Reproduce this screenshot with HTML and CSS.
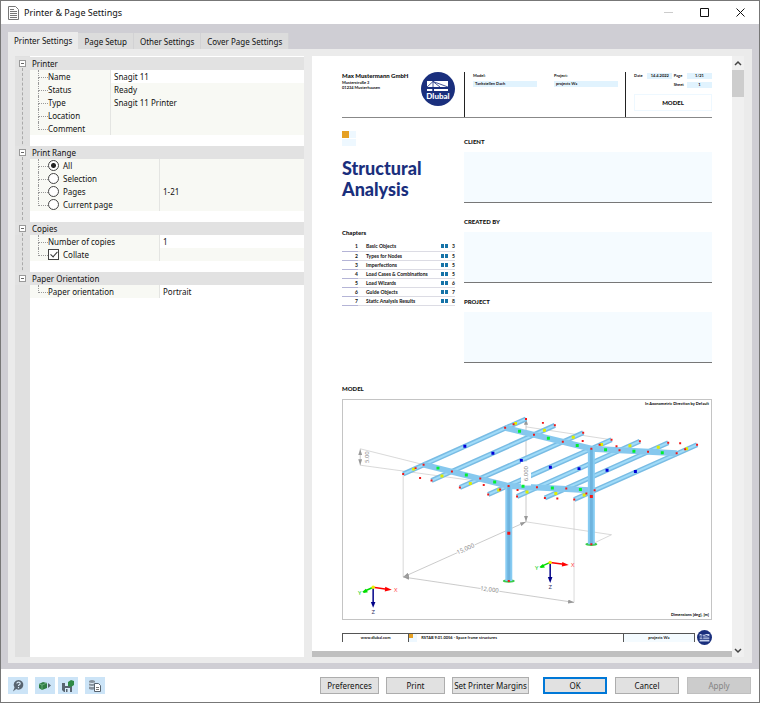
FILE: index.html
```html
<!DOCTYPE html>
<html lang="en">
<head>
  <meta charset="UTF-8">
  <title>Printer &amp; Page Settings</title>
  <link rel="stylesheet" href="styles.css">
</head>
<body>
<div class="window">

  <header class="titlebar">
    <svg class="app-icon" width="11" height="14" viewBox="0 0 11 14"><path d="M.5.5h7l3 3v10H.5z" fill="#fff" stroke="#777"/><path d="M2 3.500h4M2 5.500h7M2 7.500h7M2 9.500h7M2 11.500h7" stroke="#777"/></svg>
    <h1>Printer &amp; Page Settings</h1>
    <div class="controls">
      <button aria-label="Minimize"><svg width="9" height="9" viewBox="0 0 9 9"><path d="M0 4.500h9" stroke="#ccc"/></svg></button>
      <button aria-label="Maximize"><svg width="9" height="9" viewBox="0 0 9 9"><path d="M.5.5h8v8h-8z" fill="none" stroke="#111"/></svg></button>
      <button aria-label="Close"><svg width="9" height="9" viewBox="0 0 9 9"><path d="M.5.5l8 8M8.500.5l-8 8" stroke="#111"/></svg></button>
    </div>
  </header>

  <main class="frame">
    <nav class="tabs">
      <button class="tab active">Printer Settings</button>
      <button class="tab">Page Setup</button>
      <button class="tab">Other Settings</button>
      <button class="tab">Cover Page Settings</button>
    </nav>

    <div class="panel">
      <form class="tree" id="settings">
        <section class="group narrow">
          <h2><button type="button" class="toggle" aria-label="Collapse Printer"></button>Printer</h2>
          <div class="row edit"><label for="name">Name</label><select id="name"><option>Snagit 11</option></select></div>
          <div class="row"><span>Status</span><output>Ready</output></div>
          <div class="row"><span>Type</span><output>Snagit 11 Printer</output></div>
          <div class="row"><span>Location</span><output></output></div>
          <div class="row"><span>Comment</span><output></output></div>
        </section>
        <section class="group">
          <h2><button type="button" class="toggle" aria-label="Collapse Print Range"></button>Print Range</h2>
          <div class="row"><label><input type="radio" name="range" checked>All</label><output></output></div>
          <div class="row"><label><input type="radio" name="range">Selection</label><output></output></div>
          <div class="row"><label><input type="radio" name="range">Pages</label><input type="text" value="1-21" aria-label="Page range"></div>
          <div class="row"><label><input type="radio" name="range">Current page</label><output></output></div>
        </section>
        <section class="group">
          <h2><button type="button" class="toggle" aria-label="Collapse Copies"></button>Copies</h2>
          <div class="row edit"><label for="copies">Number of copies</label><input type="text" id="copies" value="1"></div>
          <div class="row"><label><input type="checkbox" checked>Collate</label><output></output></div>
        </section>
        <section class="group">
          <h2><button type="button" class="toggle" aria-label="Collapse Paper Orientation"></button>Paper Orientation</h2>
          <div class="row edit"><label for="orient">Paper orientation</label><select id="orient"><option>Portrait</option></select></div>
        </section>
      </form>

      <div class="preview">
        <article class="doc">
          <header class="doc-head">
            <div class="company">
              <div>
                <strong>Max Mustermann GmbH</strong>
                <p>Musterstraße 3</p>
                <p>01234 Musterhausen</p>
              </div>
              <svg class="logo" width="34" height="34" viewBox="0 0 34 34">
                <circle cx="17" cy="17" r="17" fill="#1a2f7d"/>
                <path d="M6 9h21v6H6zM6 17h5.500v2H6zM13 17h14v2H13z" fill="#fff"/>
                <path d="M6 15L12 9.500 27 15M12 9v10M12 9.500L19 15" fill="none" stroke="#1a2f7d" stroke-width=".8"/>
                <text x="17" y="27" class="logo-text">Dlubal</text>
              </svg>
            </div>
            <div class="meta">
              <div class="meta-item"><p>Model:</p><p class="fill">Tankstellen Dach</p></div>
              <div class="meta-item"><p>Project:</p><p class="fill">projects Wa</p></div>
            </div>
            <div class="sheet">
              <div class="sheet-grid">
                <span>Date</span><span class="fill">14.4.2022</span><span>Page</span><span class="fill">1/21</span>
                <span></span><span></span><span>Sheet</span><span class="fill">1</span>
              </div>
              <div class="sheet-name">MODEL</div>
            </div>
          </header>

          <div class="doc-body">
            <div class="cover">
              <svg class="squares" width="14" height="15" viewBox="0 0 14 15"><path d="M7 0h7v7H7zM0 8h14v7H0z" fill="#eef8ff"/><path d="M0 0h7v7H0z" fill="#e5a023"/></svg>
              <h2>Structural Analysis</h2>
              <h3>Chapters</h3>
              <table class="chapters">
                <tr><td>1</td><td>Basic Objects</td><td><i></i><i></i></td><td>3</td></tr>
                <tr><td>2</td><td>Types for Nodes</td><td><i></i><i></i></td><td>5</td></tr>
                <tr><td>3</td><td>Imperfections</td><td><i></i><i></i></td><td>5</td></tr>
                <tr><td>4</td><td>Load Cases &amp; Combinations</td><td><i></i><i></i></td><td>5</td></tr>
                <tr><td>5</td><td>Load Wizards</td><td><i></i><i></i></td><td>6</td></tr>
                <tr><td>6</td><td>Guide Objects</td><td><i></i><i></i></td><td>7</td></tr>
                <tr><td>7</td><td>Static Analysis Results</td><td><i></i><i></i></td><td>8</td></tr>
              </table>
            </div>
            <div class="fields">
              <section><h3>CLIENT</h3><div class="box"></div></section>
              <section><h3>CREATED BY</h3><div class="box"></div></section>
              <section><h3>PROJECT</h3><div class="box"></div></section>
            </div>
          </div>

          <h3 class="model-title">MODEL</h3>
          <svg class="model" viewBox="342 399 370 220">
            <defs>
              <marker id="arrow" viewBox="0 0 6 4" markerWidth="6" markerHeight="4" refX="6" refY="2" orient="auto-start-reverse" markerUnits="userSpaceOnUse"><path d="M0 0l6 2-6 2z" fill="#999"/></marker>
            </defs>
            <g class="dim">
              <path d="M359 448L423 464M359 464.500L480 481M402.500 473V577M574.300 499V602.500M526 426L612 439M526 521.500L612 534.500 592 544"/>
              <path class="arrows" d="M359.300 448.500V464.500"/>
              <path class="arrows" d="M402.500 577L526 521.500"/>
              <path class="arrows" d="M402.500 577L574.300 602.500"/>
              <path class="arrows" d="M526 418V521.500"/>
            </g>
            <g class="beam-edge">
              <path d="M402.500 473.500L526 418M431 480L555 424.500M459.500 487L583.500 432M488 494L612 439M517 496L640.500 440.500M545 497.500L669 442M574.500 499L698 444"/>
            </g>
            <g class="beam-core">
              <path d="M402.500 473.500L526 418M431 480L555 424.500M459.500 487L583.500 432M488 494L612 439M517 496L640.500 440.500M545 497.500L669 442M574.500 499L698 444"/>
            </g>
            <g class="supports"><ellipse cx="508.700" cy="581" rx="6" ry="1.700"/><ellipse cx="591.700" cy="544" rx="6" ry="1.700"/></g>
            <path class="girder" d="M423 464L509 485.500 595 490M505 427L591.700 448 677.500 452.500"/>
            <path class="post" d="M508.700 485V581M591.700 448V544"/>
            <path class="post-core" d="M508.700 485V581M591.700 448V544"/>
            <path d="M521 461h10v24h-10z" fill="#fff"/>
            <!-- zero-length dashes drawn as square node markers -->
            <path class="node green" d="M437.500 467.500h0M466 474.500h0M494.500 481.500h0M523 485.700h0M552.500 487.500h0M580.700 489h0M519.500 430.500h0M548.500 437.500h0M577.500 444.700h0M606 449h0M634.500 450.500h0M663 452h0"/>
            <path class="node yellow" d="M413 468.500h0M441.500 475.500h0M470 483h0M498.500 489.500h0M527 491.500h0M556 493h0M584.500 494.500h0M515.500 422.500h0M544.500 429.500h0M573.500 436.500h0M602 443.800h0M630.500 445h0M659 446.500h0M687.500 448h0"/>
            <path class="node blue" d="M464.500 445.500h0M492.700 452.500h0M521.300 459.700h0M550.500 466.700h0M579.300 468h0M607.500 469.700h0M636 471h0"/>
            <path class="node red" d="M402.500 473.500h0M431 480h0M459.500 487h0M488 494h0M517 496h0M545 497.500h0M574.500 499h0M526 418h0M555 424.500h0M583.500 432h0M612 439h0M640.500 440.500h0M669 442h0M698 444h0M423 464h0M451.500 471h0M480 478h0M508.500 485.500h0M537 486.700h0M566.500 488h0M595 489.700h0M505 427h0M534 434h0M563 441h0M591.700 448h0M620 449.500h0M648.700 451h0M677.500 452.500h0M415 467.500h0M419.500 477.500h0M483.500 484.500h0M500 489h0M517.500 489.500h0M586.700 493h0M557.500 498h0M513.500 423.500h0M543 422h0M583 440.300h0M617 445.500h0M600 444h0M681 442.600h0M686 448.600h0M508.700 581h0M591.700 544h0"/>
            <path class="node joint" d="M508.700 533h0M591.700 496h0"/>
            <g class="dim-text">
              <text transform="translate(368 456.500) rotate(-90)">5.00</text>
              <text transform="translate(528.500 473) rotate(-90)">6.000</text>
              <text class="halo" transform="translate(466 550.500) rotate(-24)">15,000</text>
              <text class="halo" transform="translate(489 591.500) rotate(8)">12,000</text>
            </g>
            <g id="axes">
              <path d="M372.300 587.300L386 589.200" stroke="#f00" stroke-width="1.500"/><path d="M384.500 586.800L391 589.800 384 591.500z" fill="#f00"/>
              <path d="M372.300 587.300L364 591" stroke="#0d0" stroke-width="1.500"/><path d="M361.500 591.800L365 588.800 367 592.300 363 593z" fill="#0d0"/>
              <path d="M372.300 587.300V603" stroke="#008" stroke-width="1.500"/><path d="M370 602h4.600l-2.300 6z" fill="#008"/>
              <circle cx="372.300" cy="587.300" r="1.700" fill="#ee0"/>
              <text class="axis" x="395" y="592" fill="#f44">X</text><text class="axis" x="358.700" y="595" fill="#0c0">Y</text><text class="axis" x="372.300" y="614" fill="#336">Z</text>
            </g>
            <use href="#axes" x="178" y="-25"/>
            <text class="note" x="710" y="404.500">In Axonometric Direction by Default</text>
            <text class="note" x="710" y="616.500">Dimensions [deg], [m]</text>
          </svg>

          <footer class="doc-foot">
            <div class="foot-row">
              <span class="site">www.dlubal.com</span>
              <span class="product"><svg width="8" height="8" viewBox="0 0 8 8"><path d="M0 0h8v8H0z" fill="#eef8ff"/><path d="M0 0h4v4H0z" fill="#e5a023"/></svg>RSTAB 9.01.0056 - Space frame structures</span>
              <span class="foot-project">projects Wa</span>
            </div>
            <svg class="foot-logo" width="15" height="15" viewBox="0 0 34 34">
              <circle cx="17" cy="17" r="17" fill="#1a2f7d"/>
              <path d="M6 9h22v6H6zM6 17h22v3H6zM6 22h22v4H6z" fill="#c8d3ee"/>
              <path d="M6 15l7-6 14 6M13 9v11" fill="none" stroke="#1a2f7d" stroke-width="2"/>
            </svg>
          </footer>
        </article>
        <div class="scrollbar">
          <svg width="8" height="14" viewBox="0 0 8 14"><path d="M1 9l3-3 3 3" fill="none" stroke="#444" stroke-width="1.500"/></svg>
          <div class="thumb"></div>
          <svg width="8" height="14" viewBox="0 0 8 14"><path d="M1 6l3 3 3-3" fill="none" stroke="#444" stroke-width="1.500"/></svg>
        </div>
      </div>
    </div>
  </main>

  <footer class="actions">
    <div class="tools">
      <button aria-label="Help"><svg width="14" height="14" viewBox="0 0 14 14"><path d="M7.500 1a4.800 4.800 0 1 1-2.300 9L2 12.500l1.500-4A4.800 4.800 0 0 1 7.500 1z" fill="#586470"/><path d="M5.800 4.500q.2-1.400 1.800-1.400t1.600 1.400q0 .9-.9 1.300t-.8 1.200M7.500 8v1.200" fill="none" stroke="#d8ebf9" stroke-width="1.200"/></svg></button>
      <button aria-label="Units"><svg width="14" height="12" viewBox="0 0 14 12"><path d="M1 4l4-2 4 1v5l-5 2-3-2z" fill="#2f7d43"/><path d="M1 4l3 1 5-2M4 5v5" fill="none" stroke="#7cc090" stroke-width=".7"/><path d="M10 3l3 2.500-3 2.500z" fill="#586470"/></svg></button>
      <button aria-label="Save as default"><svg width="14" height="14" viewBox="0 0 14 14"><path d="M1 4h10v9H3l-2-2z" fill="#586470"/><path d="M4 4h4v3H4zM4 9h5v4H4z" fill="#d8ebf9"/><path d="M5 10h1.500v3H5z" fill="#586470"/><path d="M7 3l3-2 3 1v4l-3 2-3-1z" fill="#2f8a45"/></svg></button>
      <button aria-label="Copy to report"><svg width="14" height="14" viewBox="0 0 14 14"><path d="M1 2q3-2 6 0v8q-3 1.500-6 0z" fill="#87929c"/><path d="M1 4q3 1 6 0M1 7q3 1 6 0" fill="none" stroke="#e4f0fa"/><path d="M6.500 4.500h4l2 2v6h-6z" fill="#fff" stroke="#586470"/><path d="M8 8.500h3M8 10.500h3" stroke="#777"/></svg></button>
    </div>
    <div class="buttons">
      <button class="btn">Preferences</button>
      <button class="btn">Print</button>
      <button class="btn wide">Set Printer Margins</button>
    </div>
    <div class="buttons main-buttons">
      <button class="btn default">OK</button>
      <button class="btn">Cancel</button>
      <button class="btn" disabled>Apply</button>
    </div>
  </footer>
</div>
</body>
</html>
```

FILE: styles.css
```css
* {
  margin: 0;
  padding: 0;
  box-sizing: border-box;
}

body {
  font: 8px/13px "Noto Sans", sans-serif;
  color: #111;
}

button, input, select {
  font: inherit;
  color: inherit;
  border: 0;
  border-radius: 0;
  background: none;
  appearance: none;
}

.window {
  min-height: 100vh;
  display: flex;
  flex-direction: column;
  border: 1px solid #777;
  background: #cfced4;
}

/* title bar */
.titlebar {
  display: flex;
  align-items: center;
  gap: 5px;
  height: 23px;
  padding: 0 14px 0 7px;
  background: #fff;
}

.titlebar h1 {
  flex: 1;
  font-size: 9px;
  font-weight: 400;
}

.controls {
  display: flex;
  gap: 27px;
}

.controls button {
  width: 9px;
  height: 9px;
}

svg {
  display: block;
}

/* tabs */
.frame {
  flex: 1;
  display: flex;
  flex-direction: column;
  padding: 8px 7px 6px;
}

.tabs {
  display: flex;
  align-items: flex-end;
}

.tab {
  height: 16px;
  padding: 0 6px;
  background: #dcdcdc;
  border-right: 1px solid #d2d2d4;
}

.tab.active {
  height: 17px;
  background: #ebebeb;
  border-right: 0;
}

.panel {
  flex: 1;
  display: flex;
  gap: 8px;
  padding: 7px 8px 6px 7px;
  background: #ebebeb;
}

/* settings tree */
.tree {
  flex: 289;
  padding-top: 1px;
  background: linear-gradient(to right, #e0e0e0 15px, #fff 15px);
}

.group {
  position: relative;
  padding-bottom: 11px;
}

.group:not(:last-child)::before {
  content: '';
  position: absolute;
  left: 7px;
  top: 11px;
  bottom: -3px;
  border-left: 1px dashed #aaa;
}

.group h2 {
  display: flex;
  align-items: center;
  gap: 6px;
  height: 13px;
  padding-left: 4px;
  font-size: 8px;
  font-weight: 400;
  background: #e2e2e2;
}

.toggle {
  width: 7px;
  height: 7px;
  border: 1px solid #999;
  background: linear-gradient(#666, #666) center / 3px 1px no-repeat #fff;
}

.row {
  position: relative;
  display: grid;
  grid-template-columns: 129px 1fr;
  height: 13px;
  margin-left: 15px;
  background: #f8f9f4;
}

.narrow .row {
  grid-template-columns: 80px 1fr;
}

.row::before {
  content: '';
  position: absolute;
  left: 8px;
  top: 0;
  width: 9px;
  height: 7px;
  border-left: 1px dotted #999;
  border-bottom: 1px dotted #999;
}

.row:not(:last-child)::after {
  content: '';
  position: absolute;
  left: 8px;
  top: 7px;
  height: 6px;
  border-left: 1px dotted #999;
}

.row > :first-child {
  display: flex;
  align-items: center;
  gap: 4px;
  padding-left: 18px;
}

.row > :last-child {
  width: 100%;
  height: 13px;
  padding-left: 3px;
  border-left: 1px solid #e4e5e2;
}

.row.edit > :last-child {
  background: #fff;
}

input[type="radio"],
input[type="checkbox"] {
  width: 11px;
  height: 11px;
  border: 1px solid #444;
  background: #fff;
}

input[type="radio"] {
  border-radius: 50%;
}

input[type="radio"]:checked {
  background: radial-gradient(circle, #222 2px, #fff 3px);
}

input[type="checkbox"] {
  position: relative;
}

input[type="checkbox"]:checked::after {
  content: '';
  position: absolute;
  left: 3px;
  top: 0;
  width: 3px;
  height: 6px;
  border-right: 1px solid #333;
  border-bottom: 1px solid #333;
  transform: rotate(42deg);
}

/* preview */
.preview {
  flex: 432;
  display: flex;
}

.doc {
  flex: 1;
  padding: 16px 20px 6px 30px;
  background: linear-gradient(#bfbfbf, #bfbfbf) bottom / 100% 6px no-repeat #fff;
  font: 700 4px/5px Lato, sans-serif;
  color: #111;
}

.scrollbar {
  width: 12px;
  display: flex;
  flex-direction: column;
  align-items: center;
  background: #f0f0f0;
}

.thumb {
  width: 12px;
  height: 27px;
  margin-bottom: auto;
  background: #cdcdcd;
}

.doc-head {
  display: grid;
  grid-template-columns: 122fr 161fr 87fr;
  height: 46px;
  border-bottom: 1px solid #888;
}

.company {
  display: flex;
  justify-content: space-between;
  padding-right: 9px;
}

.company strong {
  display: block;
  font-size: 6px;
  font-weight: 900;
  line-height: 8px;
  white-space: nowrap;
}

.logo-text {
  font: 900 8px Lato, sans-serif;
  fill: #fff;
  text-anchor: middle;
}

.meta {
  display: flex;
  gap: 17px;
  padding: 1px 7px 0 8px;
  border-left: 1px solid #222;
}

.meta-item {
  flex: 1;
}

.meta-item .fill {
  margin-top: 3px;
  padding-left: 2px;
}

.fill {
  line-height: 6px;
  background: #e1f3fe;
}

.sheet {
  padding: 1px 0 0 8px;
  border-left: 1px solid #222;
}

.sheet-grid {
  display: grid;
  grid-template-columns: 12px 25px 12px 25px;
  justify-content: space-between;
  row-gap: 3px;
  line-height: 6px;
}

.sheet-grid .fill {
  text-align: center;
}

.sheet-name {
  margin-top: 6px;
  border: 1px solid #eef8ff;
  font-size: 6px;
  font-weight: 900;
  line-height: 15px;
  text-align: center;
}

.doc h3 {
  font-size: 6px;
  font-weight: 900;
  line-height: 10px;
}

.doc-body {
  display: grid;
  grid-template-columns: 113fr 248fr;
  gap: 9px;
}

.cover {
  padding-top: 13px;
}

.cover h2 {
  margin: 12px 0 28px;
  font-size: 18px;
  font-weight: 900;
  line-height: 21px;
  color: #1a2f7d;
}

.chapters {
  width: 100%;
  margin-top: 4px;
  border-collapse: collapse;
  font-size: 5px;
}

.chapters td {
  height: 9px;
  border-bottom: 1px solid #dcdce4;
  line-height: 8px;
}

.chapters td:nth-child(1) {
  width: 16px;
  border-color: #b4b4d6;
  text-align: right;
}

.chapters td:nth-child(2) {
  padding-left: 8px;
}

.chapters td:nth-child(3) {
  width: 8px;
  white-space: nowrap;
}

.chapters td:nth-child(4) {
  width: 6px;
  text-align: right;
}

.chapters i {
  display: inline-block;
  width: 3px;
  height: 4px;
  margin-right: 1px;
  background: #1573a8;
}

.fields {
  display: flex;
  flex-direction: column;
  gap: 14px;
  padding-top: 19px;
}

.box {
  height: 51px;
  margin-top: 5px;
  border-bottom: 1px solid #777;
  background: #f5fbff;
}

.doc .model-title {
  margin: 21px 0 5px;
}

/* structural model */
.model {
  width: 100%;
  border: 1px solid #c4c4c4;
}

.dim path {
  fill: none;
  stroke: #c8c8c8;
  stroke-width: .7;
}

.dim .arrows {
  marker-start: url(#arrow);
  marker-end: url(#arrow);
  stroke: #b4b4b4;
}

.dim + .beam-edge,
.beam-edge {
  stroke: #79bce4;
  stroke-width: 5;
}

.beam-core {
  stroke: #a0dbf8;
  stroke-width: 2;
}

.girder {
  fill: none;
  stroke: #86c8ee;
  stroke-width: 6;
}

.post {
  stroke: #86cbf2;
  stroke-width: 7;
}

.post-core {
  stroke: #6fb4de;
  stroke-width: 3;
}

.supports {
  fill: #3ccb4c;
}

.node {
  stroke-width: 3;
  stroke-linecap: square;
}

.green { stroke: #00f030; }
.yellow { stroke: #e0ee00; }
.blue { stroke: #0000d8; }
.red { stroke: #f01818; stroke-width: 2; }
.joint { stroke: #f01818; }

.dim-text {
  font: 400 6px "Noto Sans", sans-serif;
  fill: #888;
  text-anchor: middle;
}

.halo {
  paint-order: stroke;
  stroke: #fff;
  stroke-width: 2;
}

.axis {
  font: 400 6px "Noto Sans", sans-serif;
  text-anchor: middle;
}

.note {
  font: 700 4px Lato, sans-serif;
  text-anchor: end;
}

.doc-foot {
  display: flex;
  align-items: center;
  gap: 2px;
  margin-top: 10px;
}

.foot-row {
  flex: 1;
  display: flex;
  height: 9px;
  border: 1px solid #555;
  border-bottom: 0;
  line-height: 8px;
}

.site {
  flex: 66;
  text-align: center;
}

.product {
  flex: 216;
  display: flex;
  gap: 4px;
  border-left: 1px solid #555;
}

.foot-project {
  flex: 71;
  border-left: 1px solid #555;
  background: #f4fbff;
  text-align: center;
}

/* bottom bar */
.actions {
  display: flex;
  align-items: center;
  height: 33px;
  padding: 0 8px 0 7px;
  background: #fff;
}

.tools {
  display: flex;
  gap: 7px;
  margin-right: auto;
}

.tools button {
  display: grid;
  place-items: center;
  width: 20px;
  height: 17px;
  background: #cce4f7;
}

.tools button:nth-child(3) {
  margin-left: -4px;
}

.buttons {
  display: flex;
  gap: 7px;
}

.main-buttons {
  gap: 8px;
  margin-left: 14px;
}

.btn {
  width: 59px;
  height: 17px;
  border: 1px solid #adadad;
  background: #e1e1e1;
  white-space: nowrap;
}

.btn.wide {
  width: 77px;
}

.main-buttons .btn {
  width: 64px;
}

.btn.default {
  border: 2px solid #0078d7;
}

.btn:disabled {
  border-color: #bfbfbf;
  background: #ccc;
  color: #838383;
}
```
